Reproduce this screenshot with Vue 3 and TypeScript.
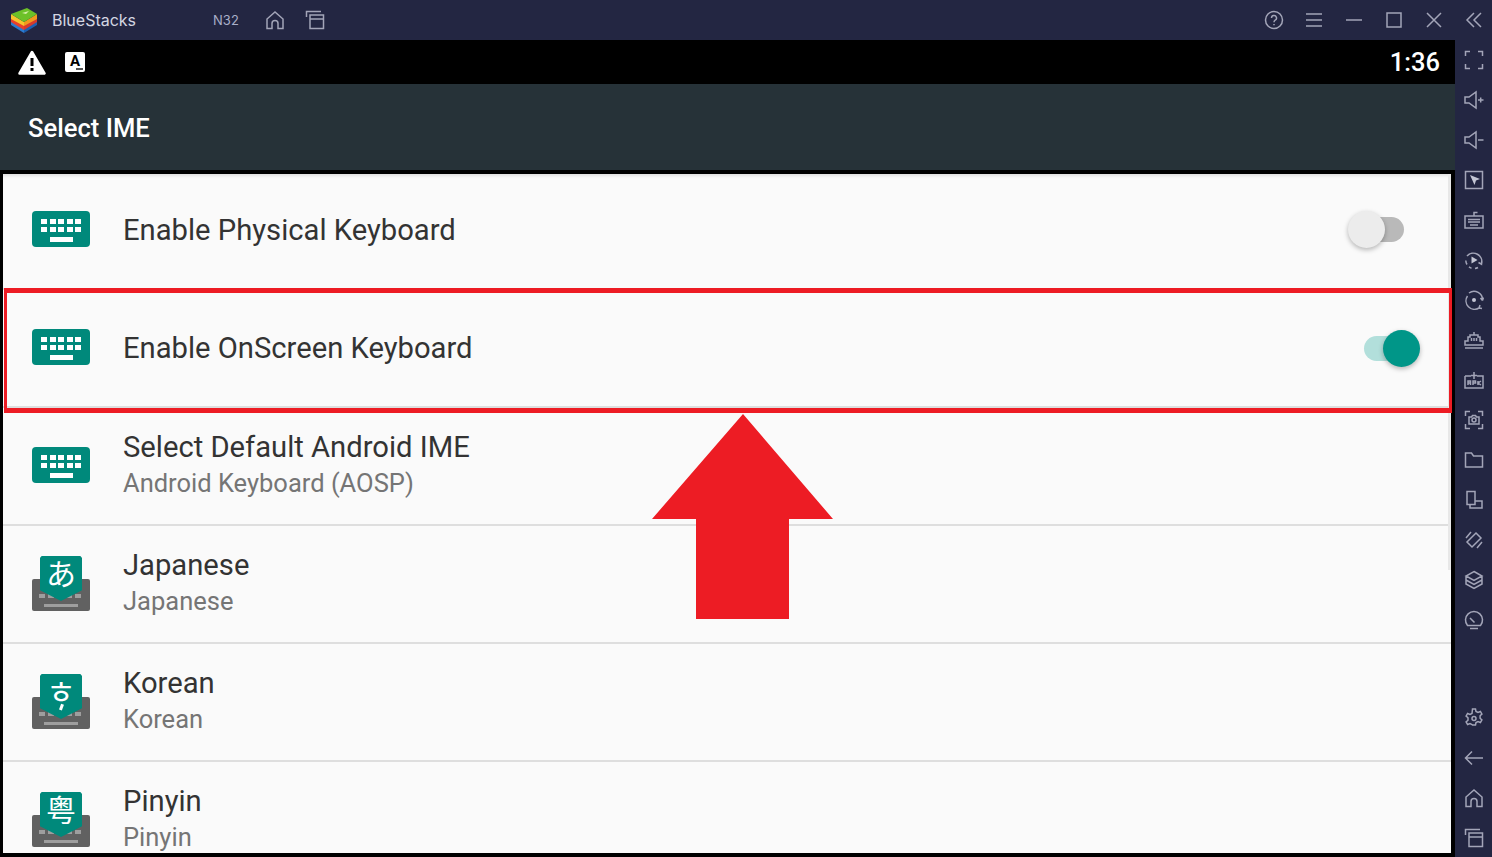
<script setup lang="ts">
interface Row {
  title: string
  sub?: string
  glyph?: string
  lang?: string
  toggle?: boolean
}

interface SideIcon {
  d: string
  solid?: string
}

const rows: Row[] = [
  { title: 'Enable Physical Keyboard', toggle: false },
  { title: 'Enable OnScreen Keyboard', toggle: true },
  { title: 'Select Default Android IME', sub: 'Android Keyboard (AOSP)' },
  { title: 'Japanese', sub: 'Japanese', glyph: 'あ', lang: 'ja' },
  { title: 'Korean', sub: 'Korean', glyph: 'ㅎ', lang: 'ko' },
  { title: 'Pinyin', sub: 'Pinyin', glyph: '粤', lang: 'zh' },
]

// stroke paths of the side toolbar, all on a 20x20 box
const sideTop: SideIcon[] = [
  { d: 'M1.500 6V1.500h4.500M14 1.500h4.500V6M18.500 14v4.500H14M6 18.500H1.500V14' },
  { d: 'M1 7v6h4l7 5V2L5 7zM14 10h5.500M16.700 7.500v5' },
  { d: 'M1 7v6h4l7 5V2L5 7zM14 10h5.500' },
  { d: 'M1.500 1.500h17v17h-17z', solid: 'M6 5l10 4-4 1.500L10.500 15z' },
  { d: 'M1 6h18v12H1zM10 6V2.500h3.500M4 9.500h12M4 12h12M6 15h8' },
  { d: 'M3 6a8.500 8.500 0 0 1 14.500 8M17.800 10.500l-.3 3.700-3-1.700M14 17.500a8.500 8.500 0 0 1-3 1M7.500 18.200a8.500 8.500 0 0 1-2.500-1.300M3 14.500a8.500 8.500 0 0 1-1.200-4', solid: 'M7.500 6.500l6 3.500-6 3.500z' },
  { d: 'M5 3a8.500 8.500 0 0 1 13.500 7.500M3.500 6a8.500 8.500 0 0 0 11.500 12M18.500 10.500l-2-2.500M18.500 10.500l1-3M15 18l3 .5M15 18l1-3', solid: 'M8 10a2 2 0 1 0 4 0 2 2 0 1 0-4 0z' },
  { d: 'M1 11v4h18v-4h-3V7h-2V5H6v2H4v4zM10 2v3M7.500 8v3M10 8v3M12.500 8v3M1 18h18' },
  { d: 'M1 6h6M13 6h6v12H1V6M10 2v7M7 5.500h6M4 15v-4h2.500v4M4 13h2.500M9 15v-4h2.500v2H9M14 11v4M17 11l-3 2 3 2' },
  { d: 'M1.500 6V1.500h4.500M14 1.500h4.500V6M18.500 14v4.500H14M6 18.500H1.500V14M5 7h2.500l1-1.500h3l1 1.500H15v7H5zM8 10a2 2 0 1 0 4 0 2 2 0 1 0-4 0z' },
  { d: 'M1.500 3h6l2 3h9v11h-17z' },
  { d: 'M3 1.500h8v13H3zM11 11h7v7H6v-3' },
  { d: 'M12 3l5 5-9 9-5-5zM2 8l5-6M13 18l5-6' },
  { d: 'M10 1.500l8 4.500-8 4.500L2 6zM2 6v8l8 4.500 8-4.500V6M2 10l8 4.500 8-4.500' },
  { d: 'M3.500 15.500a8.500 8.500 0 1 1 13 0zM6 8l4.500 4.500M6 18.500h8' },
]
const sideBottom: SideIcon[] = [
  { d: 'M8.500 1h3l.5 2.500 2 1 2.400-1 1.500 2.600-1.800 1.700v2.400l1.800 1.700-1.500 2.600-2.400-1-2 1-.5 2.500h-3L8 16.500l-2-1-2.400 1-1.500-2.600L4 12.200V9.800L2.100 8.100 3.600 5.500 6 6.500l2-1zM8 10.500a2 2 0 1 0 4 0 2 2 0 1 0-4 0z' },
  { d: 'M19 10H1.500M8 3.500L1.500 10 8 16.500' },
  { d: 'M2 18.500V9l8-7 8 7v9.500h-5v-5a3 3 0 0 0-6 0v5z' },
  { d: 'M1.500 7V1.500H16M5 5h13.500v13.500H5zM5 9h13.500' },
]
</script>

<template>
  <div class="page">
    <header class="titlebar">
      <svg class="logo" viewBox="0 0 26 25" width="26" height="25">
        <polygon points="0,12 13,21 13,25 0,17" fill="#2b7bd0" />
        <polygon points="26,12 13,21 13,25 26,17" fill="#1c5fb0" />
        <polygon points="0,9 13,17 13,22 0,14" fill="#e8402c" />
        <polygon points="26,9 13,17 13,22 26,14" fill="#d63a2c" />
        <polygon points="0,6 13,14 13,18 0,11" fill="#f5c52c" />
        <polygon points="26,6 13,14 13,18 26,11" fill="#f09a1e" />
        <polygon points="0,6 16,0 26,6 13,14" fill="#6cc128" />
        <polygon points="11,5 18,3 15,6" fill="#d6f0a8" />
      </svg>
      <span class="brand">BlueStacks</span>
      <span class="build">N32</span>
      <svg class="tb-home" viewBox="0 0 20 20" width="20" height="20"><path d="M2 18.500V9l8-7 8 7v9.500h-5v-5a3 3 0 0 0-6 0v5z" /></svg>
      <svg class="tb-recent" viewBox="0 0 20 20" width="20" height="20"><path d="M1.500 7V1.500H16M5 5h13.500v13.500H5zM5 9h13.500" /></svg>
      <div class="tb-right">
        <svg viewBox="0 0 20 20" width="20" height="20"><path d="M10 1.500a8.500 8.500 0 1 0 0 17 8.500 8.500 0 1 0 0-17zM7.500 8a2.500 2.500 0 1 1 3.700 2.200c-.8.500-1.200 1-1.200 2M10 14v1.200" /></svg>
        <svg viewBox="0 0 20 20" width="20" height="20"><path d="M2 4h16M2 10h16M2 16h16" /></svg>
        <svg viewBox="0 0 20 20" width="20" height="20"><path d="M2 10h16" /></svg>
        <svg viewBox="0 0 20 20" width="20" height="20"><path d="M3 3h14v14H3z" /></svg>
        <svg viewBox="0 0 20 20" width="20" height="20"><path d="M3 3l14 14M17 3L3 17" /></svg>
        <svg viewBox="0 0 20 20" width="20" height="20"><path d="M10 3l-7 7 7 7M17 3l-7 7 7 7" /></svg>
      </div>
    </header>

    <div class="body">
      <main class="screen">
        <div class="statusbar">
          <svg class="st-warn" viewBox="0 0 28 25" width="28" height="25">
            <path d="M14 2l12.500 21.500h-25z" />
            <rect x="12.500" y="8" width="3" height="8" fill="#000" />
            <rect x="12.500" y="18" width="3" height="3" fill="#000" />
          </svg>
          <div class="st-a">A<i></i></div>
          <span class="clock">1:36</span>
        </div>
        <div class="appbar">Select IME</div>

        <div class="list">
          <div v-for="row in rows" :key="row.title" class="row">
            <div class="icon">
              <template v-if="row.glyph">
                <div class="ime-kb">
                  <i class="ime-keys"></i>
                  <i class="ime-bar"></i>
                </div>
                <div class="ime-pin" :class="row.lang">
                  <span :lang="row.lang">{{ row.glyph }}</span>
                </div>
              </template>
              <div v-else class="kb">
                <div class="kb-keys"><i v-for="n in 10" :key="n"></i></div>
                <div class="kb-space"></div>
              </div>
            </div>
            <div class="texts" :class="{ double: row.sub }">
              <div class="title">{{ row.title }}</div>
              <div v-if="row.sub" class="sub">{{ row.sub }}</div>
            </div>
            <div v-if="row.toggle !== undefined" class="switch" :class="{ on: row.toggle }">
              <i class="thumb"></i>
            </div>
          </div>
          <div class="scroll"></div>
        </div>

        <div class="highlight"></div>
        <svg class="arrow" viewBox="0 0 182 206" width="182" height="206">
          <polygon points="91,0 181,105 137,105 137,205 44,205 44,105 0,105" fill="#ed1c24" />
        </svg>
      </main>

      <aside class="side">
        <div v-for="ic in sideTop" :key="ic.d" class="side-btn">
          <svg viewBox="0 0 20 20" width="20" height="20">
            <path :d="ic.d" />
            <path v-if="ic.solid" class="solid" :d="ic.solid" />
          </svg>
        </div>
        <div class="side-gap"></div>
        <div v-for="ic in sideBottom" :key="ic.d" class="side-btn">
          <svg viewBox="0 0 20 20" width="20" height="20"><path :d="ic.d" /></svg>
        </div>
      </aside>
    </div>
  </div>
</template>

<style>
html,
body {
  margin: 0;
  overflow: hidden;
}
</style>

<style scoped>
.page {
  width: 1492px;
  height: 857px;
  display: flex;
  flex-direction: column;
  overflow: hidden;
  background: #232642;
  font-family: Roboto, "Noto Sans CJK SC", sans-serif;
}

svg path {
  fill: none;
  stroke: #a3a5b8;
  stroke-width: 1.500;
}
svg path.solid {
  fill: #c4c6d4;
  stroke: none;
}

.titlebar {
  height: 40px;
  flex: none;
  display: flex;
  align-items: center;
  background: #232642;
}
.logo {
  margin-left: 11px;
}
.brand {
  margin-left: 15px;
  font-family: Inter, sans-serif;
  font-size: 16px;
  color: #d4d6e2;
}
.build {
  margin-left: 77px;
  font-family: Inter, sans-serif;
  font-size: 13px;
  color: #a9afc9;
}
.tb-home {
  margin-left: 26px;
}
.tb-recent {
  margin-left: 20px;
}
.tb-right {
  margin-left: auto;
  padding-right: 8px;
  display: flex;
  gap: 20px;
}

.body {
  flex: 1;
  display: flex;
  min-height: 0;
}
.screen {
  position: relative;
  width: 1455px;
  flex: none;
  display: flex;
  flex-direction: column;
  background: #000;
  overflow: hidden;
}

.statusbar {
  height: 44px;
  flex: none;
  display: flex;
  align-items: center;
  padding: 0 15px 0 18px;
}
.st-warn path {
  fill: #fff;
  stroke: #fff;
  stroke-width: 2.500;
  stroke-linejoin: round;
}
.st-a {
  position: relative;
  width: 20px;
  height: 20px;
  margin-left: 19px;
  border-radius: 2px;
  background: #fff;
  color: #000;
  font-size: 15px;
  font-weight: 700;
  line-height: 18px;
  text-align: center;
}
.st-a i {
  position: absolute;
  right: 2px;
  bottom: 2px;
  width: 7px;
  height: 2px;
  background: #555;
}
.clock {
  margin-left: auto;
  font-size: 25.500px;
  font-weight: 500;
  color: #fff;
}

.appbar {
  height: 86px;
  flex: none;
  display: flex;
  align-items: center;
  padding: 2px 0 0 28px;
  box-sizing: border-box;
  background: #263238;
  color: #fff;
  font-size: 25.600px;
  font-weight: 500;
}

.list {
  position: relative;
  flex: 1;
  min-height: 0;
  margin: 2px 4px 4px 3px;
  overflow: hidden;
  background: #fafafa;
}
.row {
  height: 116px;
  display: flex;
  align-items: center;
  border-bottom: 2px solid #dedede;
  background: #fafafa;
}
.row:first-child {
  box-shadow: inset 0 2px #000, inset 0 6px 3px -2px rgba(0, 0, 0, 0.1);
}
.row:first-child .switch {
  top: -1px;
}

.icon {
  position: relative;
  width: 58px;
  height: 56px;
  margin-left: 29px;
  margin-right: 33px;
  flex: none;
}
.kb {
  position: absolute;
  left: 0;
  top: 9px;
  width: 58px;
  height: 36px;
  box-sizing: border-box;
  padding: 8px 9px 0;
  border-radius: 4px;
  background: #00897b;
}
.kb-keys {
  display: grid;
  grid-template-columns: repeat(5, 6px);
  grid-auto-rows: 5px;
  gap: 2.500px 2.500px;
}
.kb-keys i {
  background: #fff;
}
.kb-space {
  width: 23px;
  height: 5px;
  margin: 5.500px auto 0;
  background: #fff;
}

.ime-kb {
  position: absolute;
  left: 0;
  top: 23px;
  width: 58px;
  height: 32px;
  border-radius: 2px;
  background: #616161;
}
.ime-keys {
  position: absolute;
  left: 7px;
  right: 7px;
  top: 15px;
  height: 4px;
  background: repeating-linear-gradient(90deg, #9e9e9e 0 6px, transparent 6px 9px);
}
.ime-bar {
  position: absolute;
  left: 12px;
  right: 12px;
  top: 25px;
  height: 3px;
  background: #9e9e9e;
}
.ime-pin {
  position: absolute;
  left: 8px;
  top: 0;
  width: 42px;
  height: 45px;
  display: flex;
  justify-content: center;
  box-sizing: border-box;
  background: #00897b;
  clip-path: polygon(4% 0, 96% 0, 100% 4%, 100% 76%, 50% 100%, 0 76%, 0 4%);
  color: #fff;
  font-size: 30px;
  line-height: 32px;
  font-family: "Noto Sans CJK JP", "Noto Sans CJK KR", "Noto Sans CJK SC", sans-serif;
}
.ime-pin.ko {
  font-size: 32px;
  font-family: "Noto Sans CJK KR", sans-serif;
}
.ime-pin.ko::after {
  content: "";
  position: absolute;
  left: 20px;
  top: 30px;
  width: 2.500px;
  height: 6px;
  background: #fff;
  transform: rotate(20deg);
}

.texts {
  position: relative;
  flex: 1;
  min-width: 0;
}
.texts.double {
  top: -2px;
}
.title {
  font-size: 29.200px;
  line-height: 38px;
  color: #333;
}
.sub {
  font-size: 25.500px;
  line-height: 35px;
  color: #757575;
}

.switch {
  position: relative;
  width: 40px;
  height: 25px;
  margin-right: 47px;
  flex: none;
  border-radius: 13px;
  background: #b9b9b9;
}
.switch .thumb {
  position: absolute;
  left: -16px;
  top: -6px;
  width: 37px;
  height: 37px;
  border-radius: 50%;
  background: #ececec;
  box-shadow: 0 2px 5px rgba(0, 0, 0, 0.28);
}
.switch.on {
  background: #b2dfdb;
}
.switch.on .thumb {
  left: 19px;
  background: #009688;
}

.scroll {
  position: absolute;
  right: 0;
  top: 2px;
  width: 3px;
  height: 396px;
  background: #e8e8e8;
}

.highlight {
  position: absolute;
  left: 4px;
  top: 248px;
  width: 1448px;
  height: 125px;
  box-sizing: border-box;
  border: 3px solid #ed1c24;
  border-top-width: 5px;
  border-bottom-width: 5px;
}
.arrow {
  position: absolute;
  left: 652px;
  top: 374px;
}

.side {
  flex: 1;
  display: flex;
  flex-direction: column;
  align-items: center;
  margin-bottom: -1px;
  background: #232642;
}
.side-btn {
  width: 20px;
  height: 40px;
  flex: none;
  display: flex;
  align-items: center;
}
.side-gap {
  flex: 1;
}
</style>
